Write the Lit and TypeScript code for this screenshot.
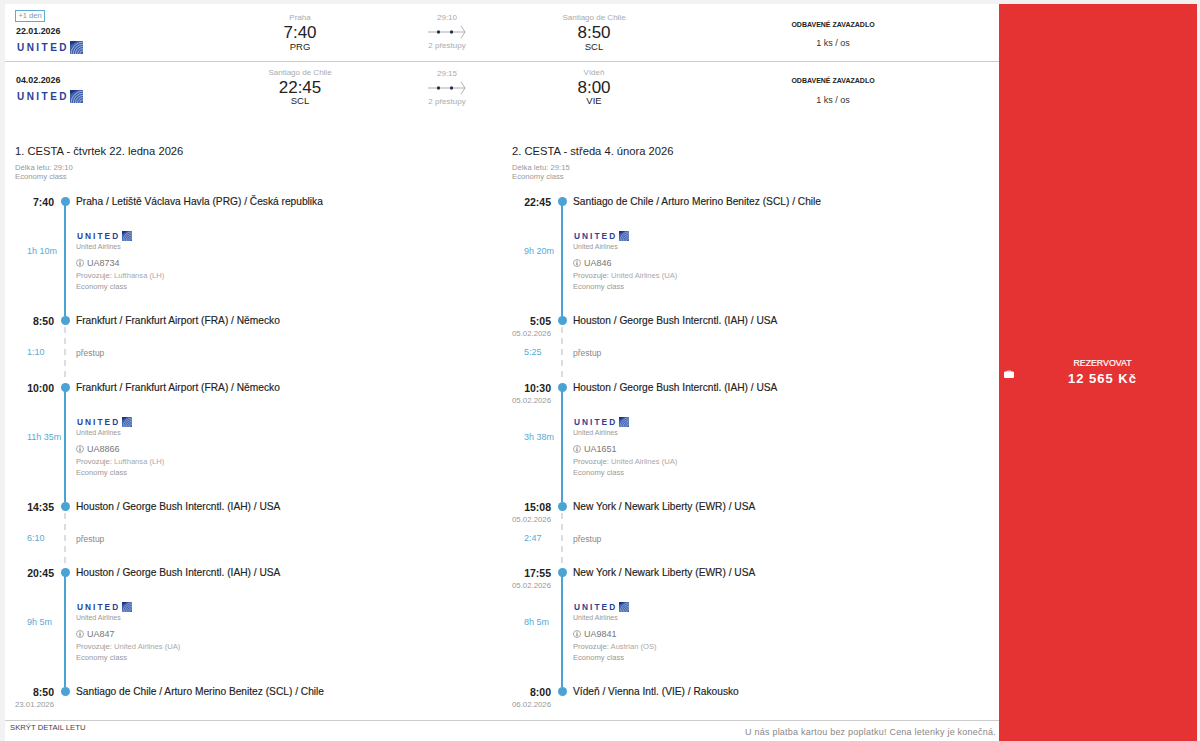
import { LitElement, html, css, svg } from "lit";
import { customElement } from "lit/decorators.js";

const globe = (h: number) => html`<svg class="globe" width=${h} height=${h} viewBox="0 0 12 12">
  <rect width="12" height="12" fill="#3f5fae"/>
  ${[3, 5, 7, 9, 11].map(r => svg`<path d="M${12 - r} 12A${r} ${r} 0 0 1 12 ${12 - r}" fill="none" stroke="#b9c9e6" stroke-width=".7"/>`)}
  <path d="M0 4L7 0H0Z" fill="#20357f"/>
</svg>`;

type Flight = { dur: string; no: string; op: string };
type Stop = { time: string; place: string; date?: string };
type Leg = { from: Stop; flight: Flight; to: Stop; wait?: string };

const PRG = "Praha / Letiště Václava Havla (PRG) / Česká republika";
const FRA = "Frankfurt / Frankfurt Airport (FRA) / Německo";
const IAH = "Houston / George Bush Intercntl. (IAH) / USA";
const SCL = "Santiago de Chile / Arturo Merino Benitez (SCL) / Chile";
const EWR = "New York / Newark Liberty (EWR) / USA";
const VIE = "Vídeň / Vienna Intl. (VIE) / Rakousko";
const UA = "United Airlines (UA)";
const LH = "Lufthansa (LH)";
const D5 = "05.02.2026";

const journeys = [
  {
    title: "1. CESTA - čtvrtek 22. ledna 2026", len: "29:10",
    legs: [
      { from: { time: "7:40", place: PRG }, flight: { dur: "1h 10m", no: "UA8734", op: LH }, to: { time: "8:50", place: FRA }, wait: "1:10" },
      { from: { time: "10:00", place: FRA }, flight: { dur: "11h 35m", no: "UA8866", op: LH }, to: { time: "14:35", place: IAH }, wait: "6:10" },
      { from: { time: "20:45", place: IAH }, flight: { dur: "9h 5m", no: "UA847", op: UA }, to: { time: "8:50", place: SCL, date: "23.01.2026" } },
    ] as Leg[],
  },
  {
    title: "2. CESTA - středa 4. února 2026", len: "29:15",
    legs: [
      { from: { time: "22:45", place: SCL }, flight: { dur: "9h 20m", no: "UA846", op: UA }, to: { time: "5:05", place: IAH, date: D5 }, wait: "5:25" },
      { from: { time: "10:30", place: IAH, date: D5 }, flight: { dur: "3h 38m", no: "UA1651", op: UA }, to: { time: "15:08", place: EWR, date: D5 }, wait: "2:47" },
      { from: { time: "17:55", place: EWR, date: D5 }, flight: { dur: "8h 5m", no: "UA9841", op: "Austrian (OS)" }, to: { time: "8:00", place: VIE, date: "06.02.2026" } },
    ] as Leg[],
  },
];

const summary = [
  { date: "22.01.2026", badge: true, a: ["Praha", "7:40", "PRG"], len: "29:10", b: ["Santiago de Chile", "8:50", "SCL"] },
  { date: "04.02.2026", badge: false, a: ["Santiago de Chile", "22:45", "SCL"], len: "29:15", b: ["Vídeň", "8:00", "VIE"] },
];

@customElement("app-root")
export class AppRoot extends LitElement {
  static styles = css`
    :host { display: block; height: 741px; box-sizing: border-box; padding: 4px 3px 0 5px; background: #f2f2f2;
      font-family: "Liberation Sans", Arial, sans-serif; color: #222; }
    .page { display: flex; height: 737px; }
    .main { width: 994px; background: #fff; display: flex; flex-direction: column; }
    .buy { position: relative; width: 198px; box-sizing: border-box; background: #e53333; color: #fff; display: flex; flex-direction: column;
      align-items: center; justify-content: center; padding: 0 0 2px 9px; }
    .buy .lbl { font-size: 8.8px; line-height: 12px; margin-bottom: 2px; -webkit-text-stroke: .2px #fff; }
    .buy .price { font-size: 13px; font-weight: 700; line-height: 16px; letter-spacing: 1px; }
    .case { position: absolute; left: 5px; top: 366px; }

    .sum { display: grid; grid-template-columns: 225px 120px 174px 120px 1fr; padding-left: 10px; height: 57px; border-bottom: 1px solid #ccc; box-sizing: content-box; }
    .sum.two { border-bottom: 0; height: 68px; }
    .d { display: flex; flex-direction: column; align-items: flex-start; padding-top: 6px; }
    .two .d { padding-top: 13px; }
    .badge { width: 30px; height: 12px; box-sizing: border-box; border: 1px solid #5badd6; color: #7d96a6; font-size: 7.5px; line-height: 10px; text-align: center; }
    .date { font-size: 8.9px; font-weight: 700; line-height: 10px; margin: 4px 0 0 1px; color: #222; }
    .two .date { margin-top: 0; }
    .logo { display: flex; align-items: center; margin-top: 5px; height: 13px; padding-left: 2px; }
    .logo .w { font-size: 10px; font-weight: 700; letter-spacing: 2.45px; color: #2a3f96; line-height: 12px; width: 53px; white-space: nowrap; }
    .ep { text-align: center; padding-top: 9px; }
    .two .ep { padding-top: 6px; }
    .city { font-size: 8px; line-height: 10px; color: #aaa; }
    .t { font-size: 17px; line-height: 18px; color: #222; margin-top: 1px; }
    .code { font-size: 9.5px; line-height: 12px; color: #222; margin-top: -1px; }
    .two .code { margin-top: -2px; }
    .arr { display: flex; flex-direction: column; align-items: center; padding-top: 9px; color: #aaa; font-size: 8px; line-height: 10px; }
    .two .arr { padding-top: 7px; }
    .arr svg { display: block; margin: 2px 0 2px; }
    .bag { text-align: center; padding: 16px 0 0 13px; }
    .two .bag { padding-top: 14px; }
    .bag .h { font-size: 7px; font-weight: 700; line-height: 10px; color: #222; }
    .bag .n { font-size: 9px; line-height: 10px; margin-top: 8px; color: #333; }
    .two .bag .n { margin-top: 9px; }

    .det { display: grid; grid-template-columns: 497px 487px; padding-left: 10px; flex: 1; }
    .title { font-size: 11.2px; line-height: 14px; margin-top: 14px; color: #222; }
    .meta { font-size: 7.7px; line-height: 9px; color: #999; }
    .meta.first { margin-top: 5px; }
    .tl { margin-top: 13px; }
    .row { display: grid; grid-template-columns: 39px 22px 1fr; }
    .node { height: 14px; align-items: center; }
    .node .tm { text-align: right; font-size: 10.5px; font-weight: 700; line-height: 14px; color: #222; }
    .node .rail { display: flex; justify-content: center; }
    .dot { width: 9px; height: 9px; border-radius: 50%; background: #4aa3d3; }
    .node .pl { font-size: 10.2px; line-height: 14px; margin-top: 1px; white-space: nowrap; color: #222; -webkit-text-stroke: .15px #222; }
    .seg { height: 105px; }
    .wait { height: 53px; }
    .wait.t2 { height: 52px; }
    .left { white-space: nowrap; }
    .dt { display: block; height: 10px; text-align: right; font-size: 7.8px; line-height: 13px; color: #999; }
    .dur { display: block; padding-left: 12px; font-size: 9px; line-height: 10px; color: #5aa9d6; }
    .seg .dur { padding-top: 38px; }
    .seg .dt + .dur { padding-top: 28px; }
    .wait .dur { padding-top: 20px; }
    .wait .dt + .dur { padding-top: 10px; }
    .line { display: block; width: 2px; height: calc(100% + 6px); margin: -3px auto 0; background: #4aa3d3; }
    .dash { display: block; width: 2px; height: 100%; margin: 0 auto; background: repeating-linear-gradient(#ddd 0 6px, transparent 6px 11px); }
    .info { padding-top: 22px; }
    .info .logo { margin: 0; height: 11px; padding-left: 1px; }
    .info .logo .w { font-size: 8.3px; letter-spacing: 2.05px; width: 45px; }
    .air, .op { font-size: 7.6px; line-height: 10px; color: #999; }
    .air { font-size: 7px; line-height: 9px; margin-top: 1px; }
    .op b { font-weight: 400; color: #a9a9a9; }
    .no { display: flex; align-items: center; gap: 3px; font-size: 9px; line-height: 12px; color: #777; margin: 6px 0 2px; }
    .pre { font-size: 8.5px; line-height: 10px; color: #888; padding-top: 21px; }

    .foot { height: 20px; border-top: 1px solid #ccc; display: flex; justify-content: space-between; padding: 0 3px 0 5px; }
    .hide { font-size: 7.7px; line-height: 14px; color: #444; }
    .note { font-size: 9px; line-height: 11px; margin-top: 6px; color: #888; letter-spacing: .23px; }
  `;

  private stop(s: Stop) {
    return html`<div class="row node">
      <div class="tm">${s.time}</div>
      <div class="rail"><span class="dot"></span></div>
      <div class="pl">${s.place}</div>
    </div>`;
  }

  private leg(l: Leg, i: number) {
    return html`
      ${this.stop(l.from)}
      <div class="row seg">
        <div class="left">${l.from.date ? html`<span class="dt">${l.from.date}</span>` : ""}<span class="dur">${l.flight.dur}</span></div>
        <div><span class="line"></span></div>
        <div class="info">
          <div class="logo"><span class="w">UNITED</span>${globe(10)}</div>
          <div class="air">United Airlines</div>
          <div class="no">
            <svg width="8" height="8" viewBox="0 0 8 8"><circle cx="4" cy="4" r="3.5" fill="none" stroke="#888" stroke-width=".7"/><path d="M4 1.7v.9M4 3.3v3" stroke="#666" stroke-width="1"/></svg>
            ${l.flight.no}
          </div>
          <div class="op">Provozuje: <b>${l.flight.op}</b></div>
          <div class="op" style="margin-top:1px">Economy class</div>
        </div>
      </div>
      ${this.stop(l.to)}
      ${l.wait ? html`<div class="row wait ${i === 1 ? "t2" : ""}">
        <div class="left">${l.to.date ? html`<span class="dt">${l.to.date}</span>` : ""}<span class="dur">${l.wait}</span></div>
        <div><span class="dash"></span></div>
        <div class="pre">přestup</div>
      </div>` : html`<div class="dt" style="width:39px">${l.to.date}</div>`}
    `;
  }

  render() {
    return html`<div class="page">
      <div class="main">
        ${summary.map((s, i) => html`<div class="sum ${i ? "two" : ""}">
          <div class="d">
            ${s.badge ? html`<div class="badge">+1 den</div>` : ""}
            <div class="date">${s.date}</div>
            <div class="logo"><span class="w">UNITED</span>${globe(13)}</div>
          </div>
          <div class="ep"><div class="city">${s.a[0]}</div><div class="t">${s.a[1]}</div><div class="code">${s.a[2]}</div></div>
          <div class="arr">
            <span>${s.len}</span>
            <svg width="38" height="14" viewBox="0 0 38 14">
              <path d="M0 7H37M33 1L37 7L33 13" fill="none" stroke="#999" stroke-width=".8"/>
              <circle cx="10.5" cy="7" r="1.7" fill="#2b3350"/><circle cx="23.5" cy="7" r="1.7" fill="#2b3350"/>
            </svg>
            <span>2 přestupy</span>
          </div>
          <div class="ep"><div class="city">${s.b[0]}</div><div class="t">${s.b[1]}</div><div class="code">${s.b[2]}</div></div>
          <div class="bag"><div class="h">ODBAVENÉ ZAVAZADLO</div><div class="n">1 ks / os</div></div>
        </div>`)}
        <div class="det">
          ${journeys.map(j => html`<div>
            <div class="title">${j.title}</div>
            <div class="meta first">Délka letu: ${j.len}</div>
            <div class="meta">Economy class</div>
            <div class="tl">${j.legs.map((l, i) => this.leg(l, i))}</div>
          </div>`)}
        </div>
        <div class="foot">
          <div class="hide">SKRÝT DETAIL LETU</div>
          <div class="note">U nás platba kartou bez poplatku! Cena letenky je konečná.</div>
        </div>
      </div>
      <div class="buy">
        <svg class="case" width="10" height="8" viewBox="0 0 10 8"><path d="M3.2 2V1h3.6v1" fill="none" stroke="#fff" stroke-width=".8"/><rect y="1.6" width="10" height="6.4" rx="1.2" fill="#fff"/></svg>
        <div class="lbl">REZERVOVAT</div>
        <div class="price">12 565 Kč</div>
      </div>
    </div>`;
  }
}
